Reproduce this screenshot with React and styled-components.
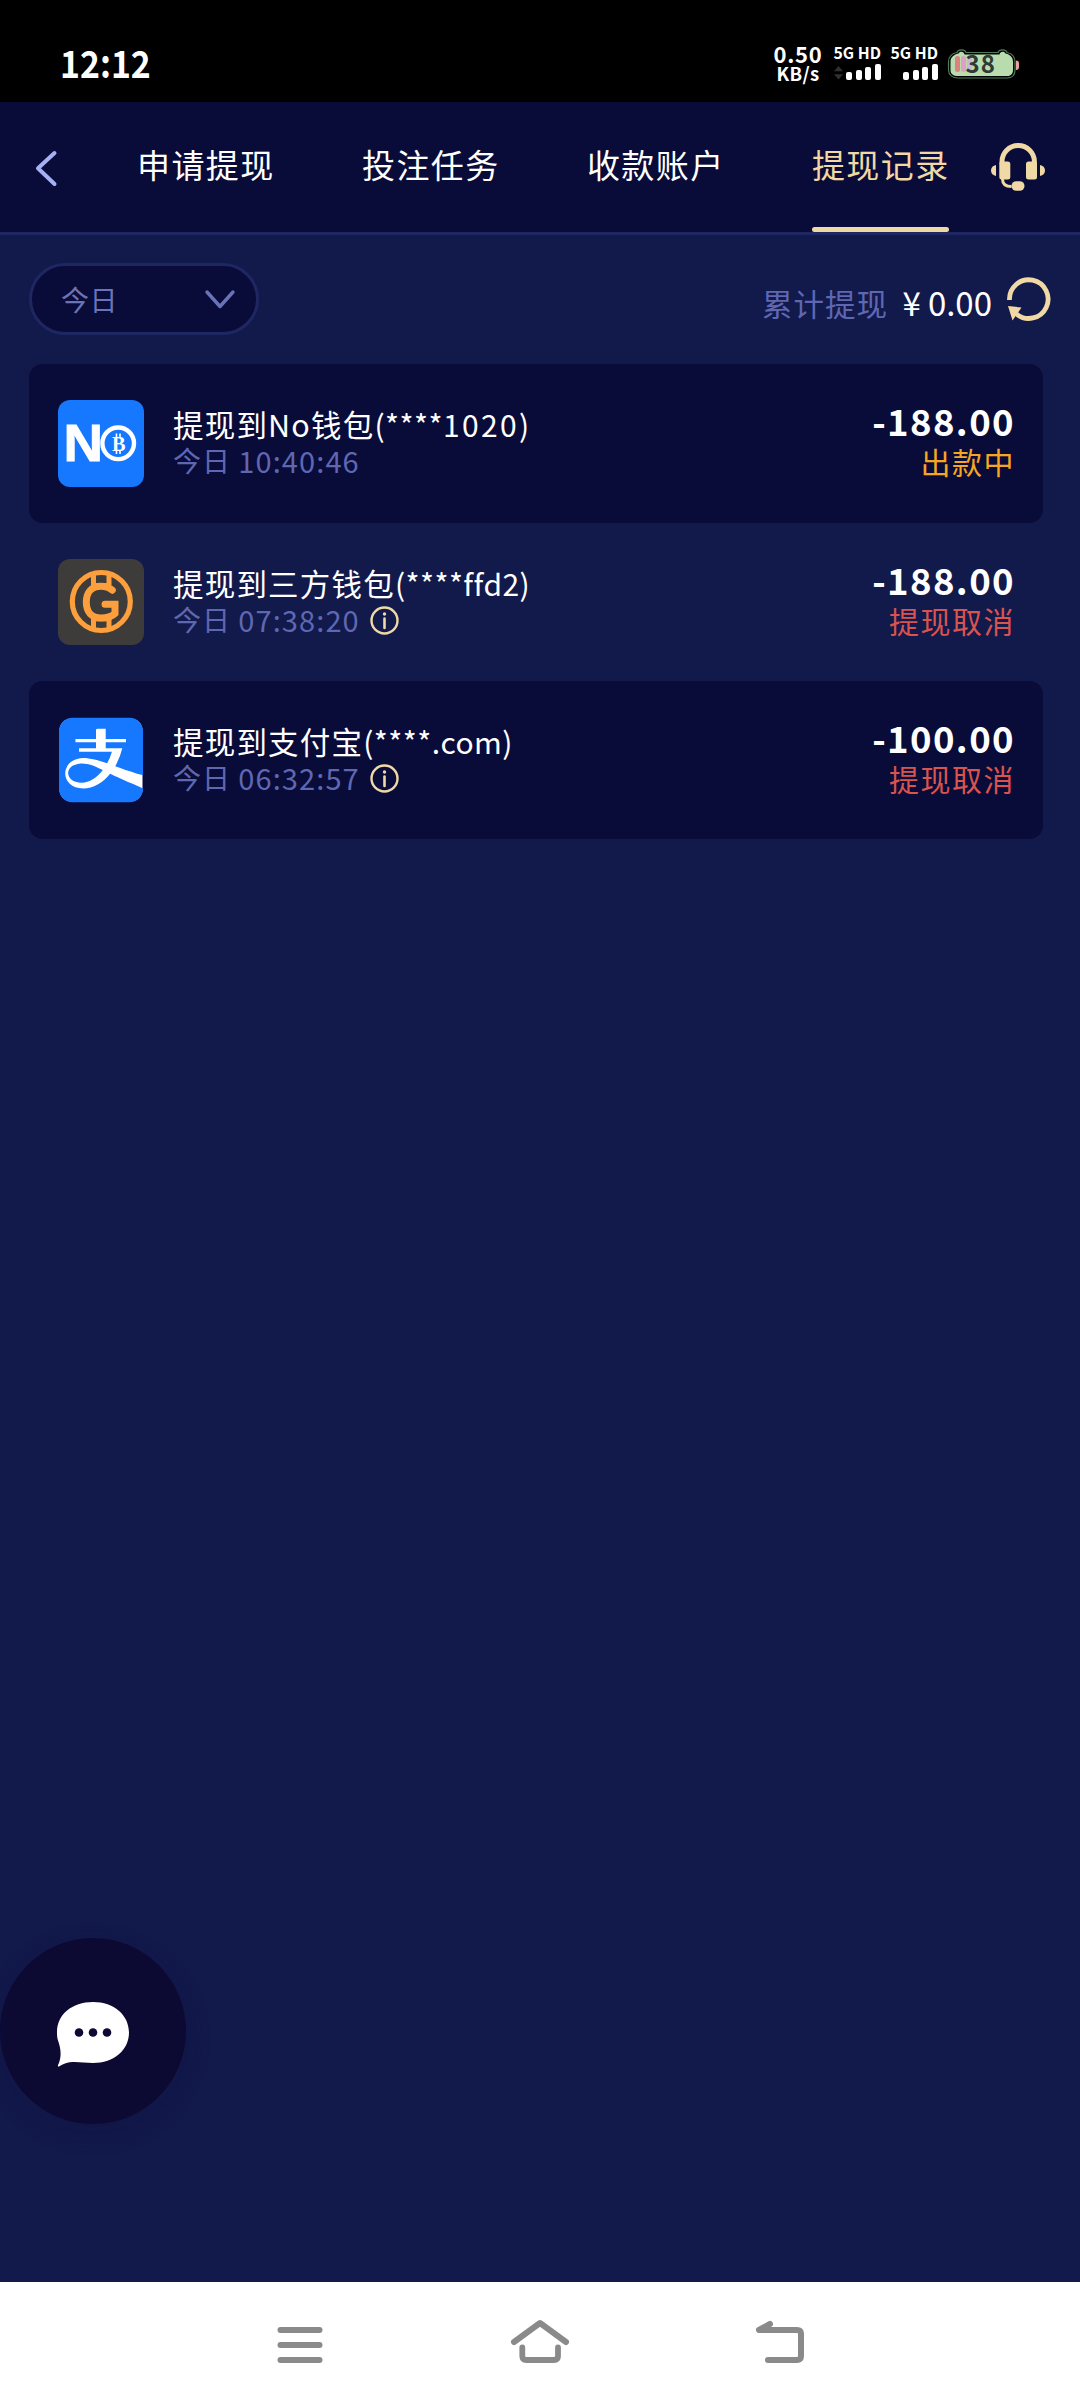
import React from "react";
import styled, { createGlobalStyle } from "styled-components";

const GlobalStyle = createGlobalStyle`
  *, *::before, *::after { box-sizing: border-box; }
  html, body { margin: 0; padding: 0; background: #12194b; }
  body { font-family: "Noto Sans CJK SC", "Noto Sans", sans-serif; color: #fff; }
  svg { display: block; flex: none; }
`;

const Screen = styled.div`
  width: 1080px;
  height: 2408px;
  display: flex;
  flex-direction: column;
  background: #12194b;
  position: relative;
  overflow: hidden;
`;

/* ---------- status bar ---------- */

const StatusBar = styled.div`
  height: 102px;
  flex: none;
  background: #000;
  display: flex;
  justify-content: space-between;
  padding: 44px 61px 0 60px;
`;

const Clock = styled.div`
  font-size: 38px;
  line-height: 36px;
  font-weight: 700;
  transform: scaleX(0.89);
  transform-origin: left center;
`;

const StatusRight = styled.div`
  display: flex;
  align-items: flex-start;
`;

const Speed = styled.div`
  width: 50px;
  margin-right: 10px;
  display: flex;
  flex-direction: column;
  align-items: center;
  font-weight: 700;
`;

const SpeedValue = styled.span`
  font-size: 22px;
  line-height: 19px;
  letter-spacing: 0.7px;
`;

const SpeedUnit = styled.span`
  font-size: 18.5px;
  line-height: 21px;
  letter-spacing: 0.3px;
`;

const Network = styled.div`
  width: 48px;
  margin-right: 9px;
  display: flex;
  flex-direction: column;
  align-items: flex-end;
`;

const NetworkLabel = styled.span`
  font-size: 15.8px;
  line-height: 16px;
  margin-top: 1px;
  font-weight: 700;
  white-space: nowrap;
`;

const Signal = styled.div`
  margin-top: 3px;
  width: 47px;
  height: 16px;
  display: flex;
  align-items: flex-end;
  gap: 3.6px;
`;

const SignalBar = styled.i`
  width: 6px;
  height: ${(p) => p.$h}px;
  border-radius: 2px;
  background: #fff;
`;

const ArrowSlot = styled.span`
  flex: 1;
  height: 16px;
  margin-right: -1px;
`;

const Battery = styled.div`
  width: 72px;
  height: 32px;
  margin-top: 4px;
  position: relative;
`;

const BatteryText = styled.span`
  position: absolute;
  left: 18.5px;
  top: 3px;
  font-size: 24px;
  line-height: 24px;
  font-weight: 700;
  letter-spacing: 1px;
  color: #2d3a35;
`;

/* ---------- header ---------- */

const Header = styled.header`
  height: 133px;
  flex: none;
  background: #090b38;
  border-bottom: 3px solid #1f2763;
  display: flex;
  align-items: flex-start;
`;

const BackButton = styled.div`
  width: 137px;
  height: 130px;
  padding: 48px 0 0 35px;
`;

const Tabs = styled.nav`
  display: flex;
  gap: 87.6px;
`;

const Tab = styled.div`
  width: 137.4px;
  height: 130px;
  display: flex;
  flex-direction: column;
  justify-content: space-between;
  font-size: 33px;
  line-height: 124px;
  letter-spacing: 1.4px;
  white-space: nowrap;
  color: ${(p) => (p.$active ? "#f2d9a3" : "#fff")};
`;

const TabLine = styled.span`
  height: 5px;
  border-radius: 3px;
  background: #eed8a6;
`;

const Support = styled.div`
  margin-left: 42px;
  padding-top: 41px;
`;

/* ---------- filter row ---------- */

const Toolbar = styled.div`
  height: 129px;
  flex: none;
  padding: 28px 29px 0 29px;
  display: flex;
  justify-content: space-between;
  align-items: flex-start;
`;

const Select = styled.div`
  width: 230px;
  height: 72px;
  border: 3px solid #1f2763;
  border-radius: 36px;
  background: #090b38;
  color: #6b73b8;
  display: flex;
  align-items: center;
  justify-content: space-between;
  padding: 0 20px 1px 29px;
  font-size: 28px;
  line-height: 66px;
  letter-spacing: 0.6px;
`;

const Total = styled.div`
  display: flex;
  align-items: flex-start;
`;

const TotalLabel = styled.span`
  font-size: 30.5px;
  line-height: 40px;
  letter-spacing: 1px;
  margin-top: 20px;
  margin-right: 14.5px;
  color: #5f67b2;
`;

const TotalValue = styled.span`
  display: flex;
  gap: 7px;
  font-size: 33px;
  line-height: 40px;
  margin-top: 19px;
  margin-right: 15px;
`;

const RefreshSlot = styled.span`
  padding-top: 13.5px;
`;

/* ---------- records ---------- */

const List = styled.div`
  padding: 0 37px 0 29px;
  flex: 1;
  display: grid;
  grid-template-rows: 159px 158px 158px;
  align-content: start;
`;

const Row = styled.div`
  border-radius: 14px;
  background: ${(p) => (p.$dark ? "#090b38" : "transparent")};
  display: flex;
  align-items: flex-start;
  padding: 36px 29px 0 29px;
`;

const Info = styled.div`
  flex: 1;
  margin-left: 29px;
  display: flex;
  flex-direction: column;
`;

const Title = styled.div`
  font-size: 30.5px;
  line-height: 36px;
  letter-spacing: 1.2px;
  margin-top: 6px;
  white-space: nowrap;
`;

const Account = styled.span`
  font-size: 30px;
  letter-spacing: 0.45px;
`;

const Digits = styled.span`
  letter-spacing: 2.4px;
`;

const Time = styled.div`
  display: flex;
  align-items: center;
  font-size: 28px;
  line-height: 36px;
  letter-spacing: 1px;
  white-space: pre;
  color: #5f67b2;
`;

const Clocked = styled.span`
  font-size: 29px;
  letter-spacing: 1.1px;
`;

const InfoSlot = styled.span`
  margin-left: 10.5px;
  padding-top: 2px;
`;

const Right = styled.div`
  display: flex;
  flex-direction: column;
  align-items: flex-end;
`;

const Amount = styled.div`
  font-size: 36.5px;
  line-height: 40px;
  font-weight: 700;
  letter-spacing: 1.4px;
  margin-top: 1px;
  margin-right: -1px;
`;

const State = styled.div`
  font-size: 30px;
  line-height: 40px;
  letter-spacing: 1.5px;
  margin-right: -1px;
  color: ${(p) => p.$color};
`;

/* ---------- chat + navigation ---------- */

const ChatButton = styled.div`
  position: absolute;
  left: 0;
  top: 1938px;
  width: 186px;
  height: 186px;
  border-radius: 50%;
  background: #0c0a33;
  box-shadow: 0 8px 26px rgba(10, 12, 50, 0.18);
  display: flex;
  align-items: center;
  justify-content: center;
  padding-top: 7px;
`;

const NavBar = styled.div`
  height: 126px;
  flex: none;
  background: #fff;
  display: flex;
  justify-content: center;
  gap: 180px;
  padding-top: 30px;
`;

const NavIcon = ({ children }) => (
  <svg width="60" height="60" viewBox="0 0 60 60" fill="none" stroke="#8a8a8a" strokeWidth="6" strokeLinecap="round" strokeLinejoin="round">
    {children}
  </svg>
);

const Headset = () => (
  <svg width="54" height="48" viewBox="0 0 54 48" fill="#f0d9a4">
    <path d="M11 21V18.5A16.2 16 0 0 1 43.4 18.5V21" fill="none" stroke="#f0d9a4" strokeWidth="5" />
    <rect x="8.3" y="18.5" width="11" height="18" rx="2.5" />
    <rect x="35" y="18.5" width="11" height="18" rx="2.5" />
    <path d="M5 22v11C2 32.500 0 30.500 0 27.500S2 22.500 5 22z" />
    <path d="M49 22v11c3-.5 5-2.500 5-5.500s-2-5-5-5.500z" />
    <path d="M11.500 36c0 5 3 7.500 9 7.500" fill="none" stroke="#f0d9a4" strokeWidth="3" />
    <rect x="20.500" y="38.200" width="13" height="9.600" rx="4.800" />
  </svg>
);

const Refresh = () => (
  <svg width="44" height="44" viewBox="0 0 44 44">
    <path d="M2.500 23A19.300 19.300 0 1 1 9.500 37" fill="none" stroke="#f0d9a4" strokeWidth="4.800" />
    <path d="M1 29l13.500 1.500L5.500 43.500z" fill="#f0d9a4" />
  </svg>
);

const InfoIcon = () => (
  <svg width="29" height="29" viewBox="0 0 29 29" fill="none" stroke="#f0d9a4">
    <circle cx="14.500" cy="14.500" r="13" strokeWidth="2.400" />
    <path d="M14.500 12.500v9.500" strokeWidth="2.600" strokeLinecap="round" />
    <circle cx="14.500" cy="8" r="1.700" fill="#f0d9a4" stroke="none" />
  </svg>
);

const NoWallet = () => (
  <svg width="86" height="87" viewBox="0 0 86 87">
    <rect width="86" height="87" rx="12" fill="#1677ff" />
    <text x="5.400" y="61" fontFamily="Liberation Sans, Arial, sans-serif" fontWeight="700" fontSize="51.500" textLength="39.500" lengthAdjust="spacingAndGlyphs" fill="#fff" stroke="#fff" strokeWidth="0.900">N</text>
    <circle cx="60.200" cy="43.300" r="15.800" fill="none" stroke="#fff" strokeWidth="4.400" />
    <text x="54" y="50.800" fontFamily="Liberation Serif, serif" fontWeight="700" fontSize="22" textLength="13.500" lengthAdjust="spacingAndGlyphs" fill="#fff">B</text>
    <path d="M58.500 33.500v4M62 33.500v4M58.500 50v4M62 50v4" stroke="#fff" strokeWidth="1.600" />
  </svg>
);

const GWallet = () => (
  <svg width="86" height="86" viewBox="0 0 86 86">
    <rect width="86" height="86" rx="12" fill="#3d3c3a" />
    <g fill="none" stroke="#fd9f3c">
      <circle cx="43.300" cy="42.500" r="29" strokeWidth="5.200" />
      <path d="M35.500 14v12M51 14v12M35.500 59v12M51 59v12" strokeWidth="5" />
      <path d="M34 26.200h18M34 60h18" strokeWidth="4.500" />
      <path d="M54.300 31.200C51 28.200 47.500 27.200 43 27.200C33.500 27.200 28.300 33.500 28.300 43C28.300 52.500 33.500 59 43 59C49 59 54 57.500 57 54.500V45.200H47" strokeWidth="7" strokeLinecap="round" strokeLinejoin="miter" />
    </g>
  </svg>
);

const Alipay = () => (
  <svg width="86" height="86" viewBox="0 0 86 86">
    <rect x="1.500" y="1.500" width="83" height="83" rx="12" fill="#fff" />
    <path
      transform="translate(.64 .64) scale(3.530 3.530)"
      fill="#1677ff"
      d="M19.695 15.07c3.426 1.158 4.203 1.22 4.203 1.22V3.846c0-2.124-1.705-3.845-3.81-3.845H3.914C1.808.001.102 1.722.102 3.846v16.31c0 2.123 1.706 3.845 3.813 3.845h16.173c2.105 0 3.81-1.722 3.81-3.845v-.157s-6.19-2.602-9.315-4.119c-2.096 2.602-4.8 4.181-7.607 4.181-4.75 0-6.361-4.19-4.112-6.949.49-.602 1.324-1.175 2.617-1.497 2.025-.502 5.247.313 8.266 1.317a16.796 16.796 0 0 0 1.341-3.302H5.781v-.952h4.799V6.975H4.77v-.953h5.81V3.591s0-.409.411-.409h2.347v2.84h5.744v.951h-5.744v1.704h4.69a19.453 19.453 0 0 1-1.986 5.06c1.424.52 2.702 1.011 3.654 1.333m-13.81-2.032c-.596.06-1.71.325-2.321.869-1.83 1.608-.735 4.55 2.968 4.55 2.151 0 4.301-1.388 5.99-3.61-2.403-1.182-4.438-2.028-6.637-1.809"
    />
  </svg>
);

const records = [
  { icon: NoWallet, wallet: "提现到No钱包", account: "1020", time: "10:40:46", amount: "-188.00", state: "出款中", color: "#f5a623", dark: true },
  { icon: GWallet, wallet: "提现到三方钱包", account: "ffd2", time: "07:38:20", amount: "-188.00", state: "提现取消", color: "#d9534f", info: true },
  { icon: Alipay, wallet: "提现到支付宝", account: ".com", time: "06:32:57", amount: "-100.00", state: "提现取消", color: "#d9534f", dark: true, info: true },
];

const tabs = ["申请提现", "投注任务", "收款账户", "提现记录"];
const levels = [8.5, 10.5, 13, 16];

const NetworkSlot = ({ arrows }) => (
  <Network>
    <NetworkLabel>5G HD</NetworkLabel>
    <Signal>
      <ArrowSlot>
        {arrows && (
          <svg width="9" height="16" viewBox="0 0 9 16" fill="#303030">
            <path d="M4.500 2L9 7.300H0zM4.500 15.500L9 10.200H0z" />
          </svg>
        )}
      </ArrowSlot>
      {levels.map((h) => (
        <SignalBar key={h} $h={h} />
      ))}
    </Signal>
  </Network>
);

export default function App() {
  return (
    <Screen>
      <GlobalStyle />
      <StatusBar>
        <Clock>12:12</Clock>
        <StatusRight>
          <Speed>
            <SpeedValue>0.50</SpeedValue>
            <SpeedUnit>KB/s</SpeedUnit>
          </Speed>
          <NetworkSlot arrows />
          <NetworkSlot />
          <Battery>
            <svg width="72" height="32" viewBox="0 0 72 32">
              <path d="M10 4.500C11 1 18 1 19 4.500H51C52 1 59 1 60 4.500C65.500 5.500 68 9 68 14V22C68 27 65 30 60 30H11C5.500 30 1.500 27 1.500 22V14C1.500 9 4.500 5.500 10 4.500z" fill="#000" stroke="#4f7a5c" strokeWidth="1.200" />
              <path d="M11.500 5.500C12.500 3 17 3 17.500 6.500H52.500C53 3 57.500 3 58.500 5.500C64 7 66 9.500 66 14V22C66 26 63.500 28 60 28H11C6.500 28 3.500 26 3.500 22V14C3.500 9.500 6 7 11.500 5.500z" fill="#b9dcae" />
              <rect x="8" y="8" width="5" height="16" rx="2.500" fill="#dc8080" />
              <rect x="14" y="8" width="5" height="16" rx="2.500" fill="#df9fc0" />
              <rect x="20" y="8" width="5" height="16" rx="2.500" fill="#cfb4da" />
              <path d="M69 12.500q3 0 3 3v3.500q0 3-3 3z" fill="#eaa2a0" />
            </svg>
            <BatteryText>38</BatteryText>
          </Battery>
        </StatusRight>
      </StatusBar>

      <Header>
        <BackButton>
          <svg width="23" height="37" viewBox="0 0 23 37" fill="none" stroke="#a6b0f5" strokeWidth="4" strokeLinecap="round" strokeLinejoin="round">
            <path d="M19.500 3L3 18.300L19.500 34" />
          </svg>
        </BackButton>
        <Tabs>
          {tabs.map((t, i) => (
            <Tab key={t} $active={i === 3}>
              {t}
              {i === 3 && <TabLine />}
            </Tab>
          ))}
        </Tabs>
        <Support>
          <Headset />
        </Support>
      </Header>

      <Toolbar>
        <Select>
          今日
          <svg width="32" height="22" viewBox="0 0 32 22" fill="none" stroke="#6b73b8" strokeWidth="3.400" strokeLinecap="round" strokeLinejoin="round">
            <path d="M3 4L16 18.500L29 4" />
          </svg>
        </Select>
        <Total>
          <TotalLabel>累计提现</TotalLabel>
          <TotalValue>
            <span>¥</span>
            <span>0.00</span>
          </TotalValue>
          <RefreshSlot>
            <Refresh />
          </RefreshSlot>
        </Total>
      </Toolbar>

      <List>
        {records.map((r, i) => (
          <Row key={i} $dark={r.dark}>
            <r.icon />
            <Info>
              <Title>
                {r.wallet}
                <Account>
                  (****{/^\d+$/.test(r.account) ? <Digits>{r.account}</Digits> : r.account})
                </Account>
              </Title>
              <Time>
                <span>今日 </span>
                <Clocked>{r.time}</Clocked>
                {r.info && (
                  <InfoSlot>
                    <InfoIcon />
                  </InfoSlot>
                )}
              </Time>
            </Info>
            <Right>
              <Amount>{r.amount}</Amount>
              <State $color={r.color}>{r.state}</State>
            </Right>
          </Row>
        ))}
      </List>

      <NavBar>
        <NavIcon>
          <path d="M10.500 18h39M10.500 33h39M10.500 48h39" />
        </NavIcon>
        <NavIcon>
          <path d="M4 30L30 11L56 30" strokeWidth="6" />
          <path d="M12.300 35.500V44q0 4 4 4H44q4 0 4-4V35.500" strokeWidth="5.800" />
        </NavIcon>
        <NavIcon>
          <path d="M20 12L9 18H47q4 0 4 4V44q0 4-4 4H18" />
        </NavIcon>
      </NavBar>

      <ChatButton>
        <svg width="74" height="67" viewBox="0 0 74 67">
          <path d="M37 1C58 1 73 14 73 31.500S58 62 37 62C27 62 17 59.500 9 62.500Q5 64 3 65.500Q1 66 2.500 63C6 55 4.500 47 2.500 41C1 37 1 34 1 31C1 13.500 16 1 37 1z" fill="#fff" />
          <g fill="#0c0a33">
            <circle cx="23" cy="31.500" r="4.300" />
            <circle cx="37" cy="31.500" r="4.300" />
            <circle cx="51" cy="31.500" r="4.300" />
          </g>
        </svg>
      </ChatButton>
    </Screen>
  );
}
